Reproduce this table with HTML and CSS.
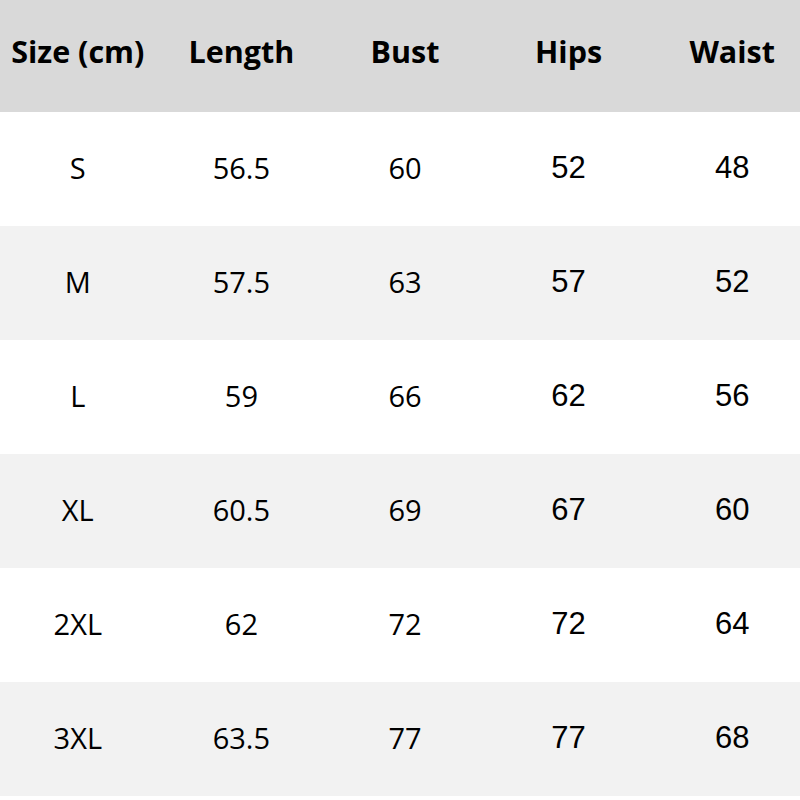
FILE: index.html
```html
<!DOCTYPE html>
<html>
<head>
<meta charset="utf-8">
<link rel="stylesheet" href="styles.css">
</head>
<body>
<div class="table">
  <div class="row head">
    <div class="cell">Size (cm)</div><div class="cell">Length</div><div class="cell">Bust</div><div class="cell">Hips</div><div class="cell">Waist</div>
  </div>
  <div class="row">
    <div class="cell">S</div><div class="cell">56.5</div><div class="cell">60</div><div class="cell arial">52</div><div class="cell arial">48</div>
  </div>
  <div class="row alt">
    <div class="cell">M</div><div class="cell">57.5</div><div class="cell">63</div><div class="cell arial">57</div><div class="cell arial">52</div>
  </div>
  <div class="row">
    <div class="cell">L</div><div class="cell">59</div><div class="cell">66</div><div class="cell arial">62</div><div class="cell arial">56</div>
  </div>
  <div class="row alt">
    <div class="cell">XL</div><div class="cell">60.5</div><div class="cell">69</div><div class="cell arial">67</div><div class="cell arial">60</div>
  </div>
  <div class="row">
    <div class="cell">2XL</div><div class="cell">62</div><div class="cell">72</div><div class="cell arial">72</div><div class="cell arial">64</div>
  </div>
  <div class="row alt">
    <div class="cell">3XL</div><div class="cell">63.5</div><div class="cell">77</div><div class="cell arial">77</div><div class="cell arial">68</div>
  </div>
</div>
</body>
</html>
```
FILE: styles.css
```css
html, body {
  margin: 0;
  padding: 0;
  background: #ffffff;
  overflow: hidden;
}
body {
  width: 800px;
  height: 800px;
  font-family: "Open Sans", "Noto Sans", sans-serif;
  color: #000;
}
.table {
  margin-left: -4px;
  width: 818px;
}
.row {
  display: grid;
  grid-template-columns: repeat(5, 1fr);
  height: 114px;
  align-items: center;
  background: #ffffff;
}
.row.alt {
  background: #f2f2f2;
}
.row.head {
  height: 112px;
  background: #d9d9d9;
  font-weight: 700;
}
.cell {
  text-align: center;
  font-size: 29px;
  line-height: 1;
  padding-bottom: 3px;
}
.head .cell {
  font-size: 30.5px;
  padding-bottom: 9px;
}
.cell.arial {
  font-family: "Liberation Sans", Arial, sans-serif;
  font-size: 31px;
}
```
